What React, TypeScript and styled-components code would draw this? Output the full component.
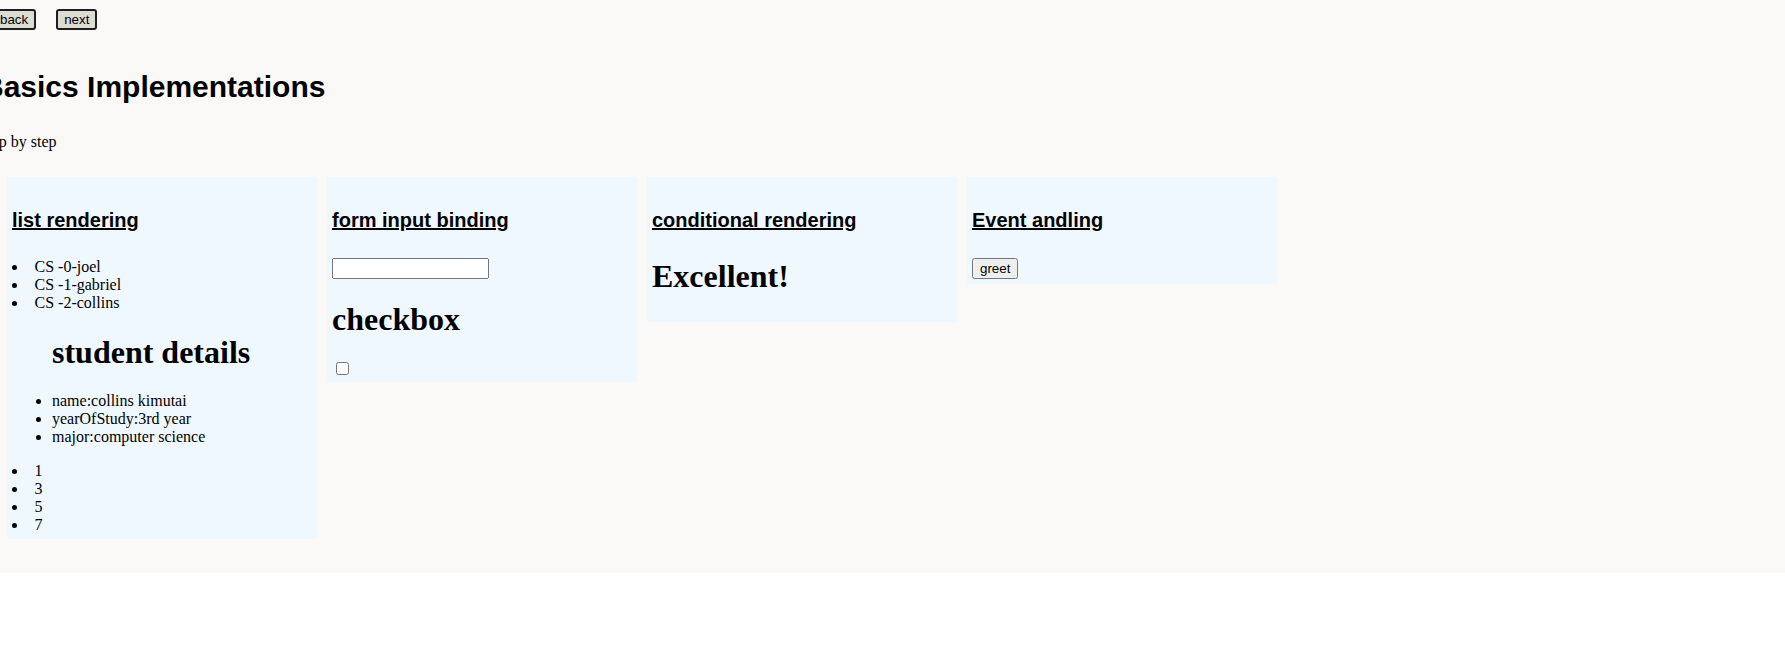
import React from "react";
import styled, { createGlobalStyle } from "styled-components";

const GlobalStyle = createGlobalStyle`
  body {
    margin: 0;
    background: #ffffff;
    color: #000000;
    font-family: "Liberation Serif", "Times New Roman", serif;
    font-size: 16px;
  }
`;

const Page = styled.div`
  background: #faf9f7;
  padding-bottom: 34px;
`;

const Header = styled.header`
  margin-left: -19px;
`;

const Nav = styled.nav`
  display: flex;
  align-items: flex-start;
  gap: 20px;
  padding: 9px 0 0 11px;
`;

const NavButton = styled.button`
  height: 21px;
  padding: 1px 6px;
  font: 13.333px "Liberation Sans", Arial, sans-serif;
  color: #000;
  background: #dddcd3;
  border: 2px solid #1f1f1f;
  border-radius: 3px;
`;

const Title = styled.h1`
  margin: 40px 0 0 1px;
  font-family: "Liberation Sans", Arial, sans-serif;
  font-size: 30px;
  font-weight: bold;
`;

const Tagline = styled.p`
  margin: 29px 0 0;
`;

const Cards = styled.section`
  display: flex;
  align-items: flex-start;
  gap: 10px;
  margin-top: 26px;
  padding-left: 7px;
`;

const Card = styled.div`
  width: 300px;
  padding: 5px;
  background: #f0f8ff;
`;

const CardTitle = styled.h4`
  margin: 26.6px 0;
  font-family: "Liberation Sans", Arial, sans-serif;
  font-size: 20px;
  font-weight: bold;
  text-decoration: underline;
`;

const BigHeading = styled.h1`
  margin: 0.67em 0;
  font-size: 32px;
  font-weight: bold;
`;

const List = styled.ul<{ $flush?: boolean }>`
  margin: 16px 0 ${(p) => (p.$flush ? "0" : "16px")};
  padding-left: 16px;

  li {
    padding-left: 6.5px;
  }
`;

const Details = styled.div`
  padding-left: 40px;

  ul {
    margin: 0 0 16px;
    padding: 0;
  }
`;

const TextInput = styled.input`
  box-sizing: border-box;
  width: 157px;
  font: 13.333px "Liberation Sans", Arial, sans-serif;
`;

const Row = styled.div``;

const CheckRow = styled.div`
  display: flex;
`;

const Checkbox = styled.input`
  margin: 3px 3px 2px 4px;
`;

const PlainButton = styled.button`
  font: 13.333px "Liberation Sans", Arial, sans-serif;
`;

const students = ["joel", "gabriel", "collins"];
const details = {
  name: "collins kimutai",
  yearOfStudy: "3rd year",
  major: "computer science",
};
const numbers = [1, 3, 5, 7];

export default function App() {
  const [text, setText] = React.useState("");
  const [checked, setChecked] = React.useState(false);
  const score = 90;

  return (
    <>
      <GlobalStyle />
      <Page>
        <Header>
          <Nav>
            <NavButton>back</NavButton>
            <NavButton>next</NavButton>
          </Nav>
          <Title>Basics Implementations</Title>
          <Tagline>step by step</Tagline>
        </Header>

        <Cards>
          <Card>
            <CardTitle>list rendering</CardTitle>
            <List>
              {students.map((s, i) => (
                <li key={s}>CS -{i}-{s}</li>
              ))}
            </List>
            <Details>
              <BigHeading>student details</BigHeading>
              <ul>
                {Object.entries(details).map(([k, v]) => (
                  <li key={k}>
                    {k}:{v}
                  </li>
                ))}
              </ul>
            </Details>
            <List $flush>
              {numbers.map((n) => (
                <li key={n}>{n}</li>
              ))}
            </List>
          </Card>

          <Card>
            <CardTitle>form input binding</CardTitle>
            <Row>
              <TextInput
                type="text"
                value={text}
                onChange={(e) => setText(e.target.value)}
              />
            </Row>
            <BigHeading>checkbox</BigHeading>
            <CheckRow>
              <Checkbox
                type="checkbox"
                checked={checked}
                onChange={(e) => setChecked(e.target.checked)}
              />
            </CheckRow>
          </Card>

          <Card>
            <CardTitle>conditional rendering</CardTitle>
            {score > 80 ? <BigHeading>Excellent!</BigHeading> : <BigHeading>Keep going</BigHeading>}
          </Card>

          <Card>
            <CardTitle>Event andling</CardTitle>
            <Row>
              <PlainButton onClick={() => alert("hello")}>greet</PlainButton>
            </Row>
          </Card>
        </Cards>
      </Page>
    </>
  );
}
